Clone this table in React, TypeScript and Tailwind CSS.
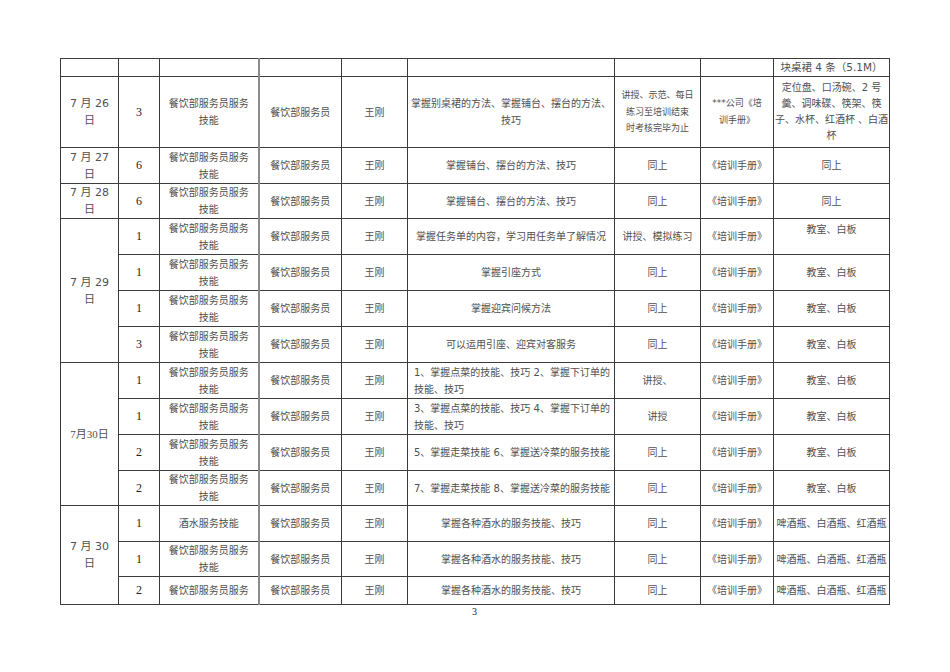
type Row = {
  h: string;
  date?: { text: string; span: number; serif?: boolean };
  n: string;
  course: string;
  who: string;
  teacher: string;
  topic: string;
  topicLeft?: boolean;
  method: string;
  methodSmall?: boolean;
  book: string;
  gear: string;
  gearTop?: boolean;
};

const STAFF = "餐饮部服务员";
const COURSE = "餐饮部服务员服务\n技能";

const rows: Row[] = [
  { h: "h-[18px]", date: { text: "", span: 1 }, n: "", course: "", who: "", teacher: "", topic: "", method: "", book: "", gear: "块桌裙 4 条（5.1M）" },
  {
    h: "h-[71px]",
    date: { text: "7 月 26\n日", span: 1 },
    n: "3",
    course: COURSE,
    who: STAFF,
    teacher: "王刚",
    topic: "掌握别桌裙的方法、掌握铺台、摆台的方法、\n技巧",
    method: "讲授、示范、每日\n练习至培训结束\n时考核完毕为止",
    methodSmall: true,
    book: "***公司《培\n训手册》",
    gear: "定位盘、口汤碗、2 号\n羹、调味碟、筷架、筷\n子、水杯、红酒杯 、白酒\n杯",
  },
  { h: "h-[36px]", date: { text: "7 月 27\n日", span: 1 }, n: "6", course: COURSE, who: STAFF, teacher: "王刚", topic: "掌握铺台、摆台的方法、技巧", method: "同上", book: "《培训手册》", gear: "同上" },
  { h: "h-[35px]", date: { text: "7 月 28\n日", span: 1 }, n: "6", course: COURSE, who: STAFF, teacher: "王刚", topic: "掌握铺台、摆台的方法、技巧", method: "同上", book: "《培训手册》", gear: "同上" },
  { h: "h-[36px]", date: { text: "7 月 29\n日", span: 4 }, n: "1", course: COURSE, who: STAFF, teacher: "王刚", topic: "掌握任务单的内容，学习用任务单了解情况", method: "讲授、模拟练习", book: "《培训手册》", gear: "教室、白板", gearTop: true },
  { h: "h-[36px]", n: "1", course: COURSE, who: STAFF, teacher: "王刚", topic: "掌握引座方式", method: "同上", book: "《培训手册》", gear: "教室、白板" },
  { h: "h-[36px]", n: "1", course: COURSE, who: STAFF, teacher: "王刚", topic: "掌握迎宾问候方法", method: "同上", book: "《培训手册》", gear: "教室、白板" },
  { h: "h-[36px]", n: "3", course: COURSE, who: STAFF, teacher: "王刚", topic: "可以运用引座、迎宾对客服务", method: "同上", book: "《培训手册》", gear: "教室、白板" },
  { h: "h-[36px]", date: { text: "7月30日", span: 4, serif: true }, n: "1", course: COURSE, who: STAFF, teacher: "王刚", topic: "1、掌握点菜的技能、技巧 2、掌握下订单的\n技能、技巧", topicLeft: true, method: "讲授、", book: "《培训手册》", gear: "教室、白板" },
  { h: "h-[36px]", n: "1", course: COURSE, who: STAFF, teacher: "王刚", topic: "3、掌握点菜的技能、技巧 4、掌握下订单的\n技能、技巧", topicLeft: true, method: "讲授", book: "《培训手册》", gear: "教室、白板" },
  { h: "h-[36px]", n: "2", course: COURSE, who: STAFF, teacher: "王刚", topic: "5、掌握走菜技能 6、掌握送冷菜的服务技能", topicLeft: true, method: "同上", book: "《培训手册》", gear: "教室、白板" },
  { h: "h-[35px]", n: "2", course: COURSE, who: STAFF, teacher: "王刚", topic: "7、掌握走菜技能 8、掌握送冷菜的服务技能", topicLeft: true, method: "同上", book: "《培训手册》", gear: "教室、白板" },
  { h: "h-[36px]", date: { text: "7 月 30\n日", span: 3 }, n: "1", course: "酒水服务技能", who: STAFF, teacher: "王刚", topic: "掌握各种酒水的服务技能、技巧", method: "同上", book: "《培训手册》", gear: "啤酒瓶、白酒瓶、红酒瓶" },
  { h: "h-[35px]", n: "1", course: COURSE, who: STAFF, teacher: "王刚", topic: "掌握各种酒水的服务技能、技巧", method: "同上", book: "《培训手册》", gear: "啤酒瓶、白酒瓶、红酒瓶" },
  { h: "h-[28px]", n: "2", course: "餐饮部服务员服务", who: STAFF, teacher: "王刚", topic: "掌握各种酒水的服务技能、技巧", method: "同上", book: "《培训手册》", gear: "啤酒瓶、白酒瓶、红酒瓶" },
];

const cell = "border border-[#3c3c3c] p-0 text-center align-middle whitespace-pre-line";

export default function App() {
  return (
    <div className="min-h-[672px] w-[950px] bg-white pl-[60px] pt-[58px] font-['DejaVu_Sans','Noto_Sans_CJK_SC',sans-serif] text-[10px] leading-[17px] text-[#505050]">
      <table className="w-[829px] table-fixed border-collapse">
        <colgroup>
          <col className="w-[58px]" />
          <col className="w-[41px]" />
          <col className="w-[99px]" />
          <col className="w-[83px]" />
          <col className="w-[66px]" />
          <col className="w-[207px]" />
          <col className="w-[86px]" />
          <col className="w-[73px]" />
          <col className="w-[116px]" />
        </colgroup>
        <tbody>
          {rows.map((r, i) => (
            <tr key={i} className={r.h}>
              {r.date && (
                <td
                  rowSpan={r.date.span}
                  className={`${cell} text-[11px] ${r.date.serif ? "font-['Liberation_Serif','Noto_Sans_CJK_SC',serif]" : ""}`}
                >
                  {r.date.text}
                </td>
              )}
              <td className={`${cell} font-['Liberation_Serif',serif] text-[12px] text-[#222]`}>{r.n}</td>
              <td className={`${cell} border-r-2 border-r-[#8a8a8a]`}>{r.course}</td>
              <td className={cell}>{r.who}</td>
              <td className={cell}>{r.teacher}</td>
              <td className={`${cell} ${r.topicLeft ? "text-left pl-[6px]" : ""}`}>{r.topic}</td>
              <td className={`${cell} ${r.methodSmall ? "text-[9px] leading-[16.5px]" : ""}`}>{r.method}</td>
              <td className={`${cell} ${r.book.startsWith("***") ? "text-[9px]" : ""}`}>{r.book}</td>
              <td
                className={`${cell} ${r.gearTop ? "align-top pt-[2px]" : ""} ${i === 1 ? "leading-[16px]" : ""} ${i === 0 ? "text-[10.5px]" : ""}`}
              >
                {r.gear}
              </td>
            </tr>
          ))}
        </tbody>
      </table>
      <div className="w-[829px] text-center font-['Liberation_Serif',serif] text-[10px] leading-[14px] text-[#222]">3</div>
    </div>
  );
}
